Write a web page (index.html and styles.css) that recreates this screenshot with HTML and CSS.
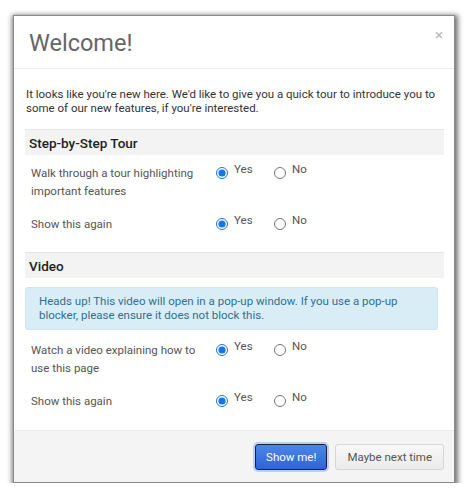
FILE: index.html
```html
<!DOCTYPE html>
<html>
<head>
<meta charset="utf-8">
<link rel="stylesheet" href="styles.css">
</head>
<body>
<div class="modal">
  <div class="modal-header">
    <h1 class="title">Welcome!</h1>
    <span class="close">&times;</span>
  </div>
  <div class="modal-body">
    <p class="intro">It looks like you're new here. We'd like to give you a quick tour to introduce you to some of our new features, if you're interested.</p>
    <div class="section-head">Step-by-Step Tour</div>
    <div class="row">
      <div class="label">Walk through a tour highlighting important features</div>
      <div class="options">
        <label class="opt"><input type="radio" name="a" checked><span>Yes</span></label>
        <label class="opt"><input type="radio" name="a"><span>No</span></label>
      </div>
    </div>
    <div class="row">
      <div class="label">Show this again</div>
      <div class="options">
        <label class="opt"><input type="radio" name="b" checked><span>Yes</span></label>
        <label class="opt"><input type="radio" name="b"><span>No</span></label>
      </div>
    </div>
    <div class="section-head second">Video</div>
    <div class="alert">Heads up! This video will open in a pop-up window. If you use a pop-up blocker, please ensure it does not block this.</div>
    <div class="row">
      <div class="label">Watch a video explaining how to use this page</div>
      <div class="options">
        <label class="opt"><input type="radio" name="c" checked><span>Yes</span></label>
        <label class="opt"><input type="radio" name="c"><span>No</span></label>
      </div>
    </div>
    <div class="row">
      <div class="label">Show this again</div>
      <div class="options">
        <label class="opt"><input type="radio" name="d" checked><span>Yes</span></label>
        <label class="opt"><input type="radio" name="d"><span>No</span></label>
      </div>
    </div>
  </div>
  <div class="modal-footer">
    <button class="btn btn-primary">Show me!</button>
    <button class="btn btn-default">Maybe next time</button>
  </div>
</div>
</body>
</html>
```
FILE: styles.css
```css
html, body {
  margin: 0;
  padding: 0;
  background: #fff;
}
body {
  padding: 15px 0 0 13px;
  font-family: Roboto, "Liberation Sans", sans-serif;
}
.modal {
  width: 440px;
  border: 1px solid #8a8a8a;
  background: #fff;
  box-shadow: 1px 2px 5px 2px rgba(0, 0, 0, 0.55);
}
.modal-header {
  height: 52px;
  border-bottom: 1px solid #ececec;
  display: flex;
  justify-content: space-between;
  align-items: flex-start;
  padding: 0 11px 0 15px;
}
.title {
  margin: 13px 0 0 0;
  font-size: 23.5px;
  font-weight: 400;
  color: #666;
  line-height: 28px;
}
.close {
  margin-top: 9px;
  font-size: 15px;
  color: #bbb;
  line-height: 20px;
}
.modal-body {
  padding: 18px 10px 14px 11px;
}
.intro {
  margin: 0 0 14px 1px;
  font-size: 11.5px;
  line-height: 14px;
  color: #333;
}
.section-head {
  border-top: 1px solid #e4e4e4;
  background: #f3f3f3;
  padding: 4px 4px 3px;
  font-size: 13.5px;
  font-weight: 500;
  line-height: 18px;
  color: #222;
}
.section-head.second {
  margin-top: 13px;
}
.row {
  display: flex;
  padding: 9px 0 6px 6px;
}
.label {
  width: 173px;
  padding-right: 12px;
  font-size: 11.5px;
  line-height: 18px;
  color: #555;
}
.options {
  display: flex;
  gap: 18px;
}
.opt {
  display: flex;
  align-items: flex-start;
  font-size: 11.5px;
  color: #555;
  line-height: 14px;
}
.opt input {
  margin: 3px 6px 0 0;
  width: 12px;
  height: 12px;
  accent-color: #1a73e8;
}
.opt span {
  margin-top: -2px;
  width: 22px;
}
.alert {
  margin: 9px 6px 2px 0;
  background: #d9edf7;
  border: 1px solid #cfe6f1;
  border-radius: 3px;
  padding: 7px 13px;
  font-size: 11.5px;
  line-height: 13.5px;
  color: #31708f;
}
.modal-footer {
  background: #f4f4f4;
  border-top: 1px solid #ececec;
  height: 51px;
  display: flex;
  justify-content: flex-end;
  align-items: center;
  padding: 0 10px;
  gap: 8px;
}
.btn {
  font-family: Roboto, "Liberation Sans", sans-serif;
  font-size: 11.5px;
  height: 26px;
  border-radius: 3px;
  padding: 0 10px;
}
.btn-primary {
  color: #fff;
  background: linear-gradient(#4d86e8, #2f63d8);
  border: 1.5px solid #1d1f3b;
  box-shadow: 0 0 0 2px rgba(120, 160, 240, 0.45);
}
.btn-default {
  color: #555;
  background: linear-gradient(#f8f8f8, #ebebeb);
  border: 1px solid #d6d6d6;
  padding: 0 11px;
}
```
